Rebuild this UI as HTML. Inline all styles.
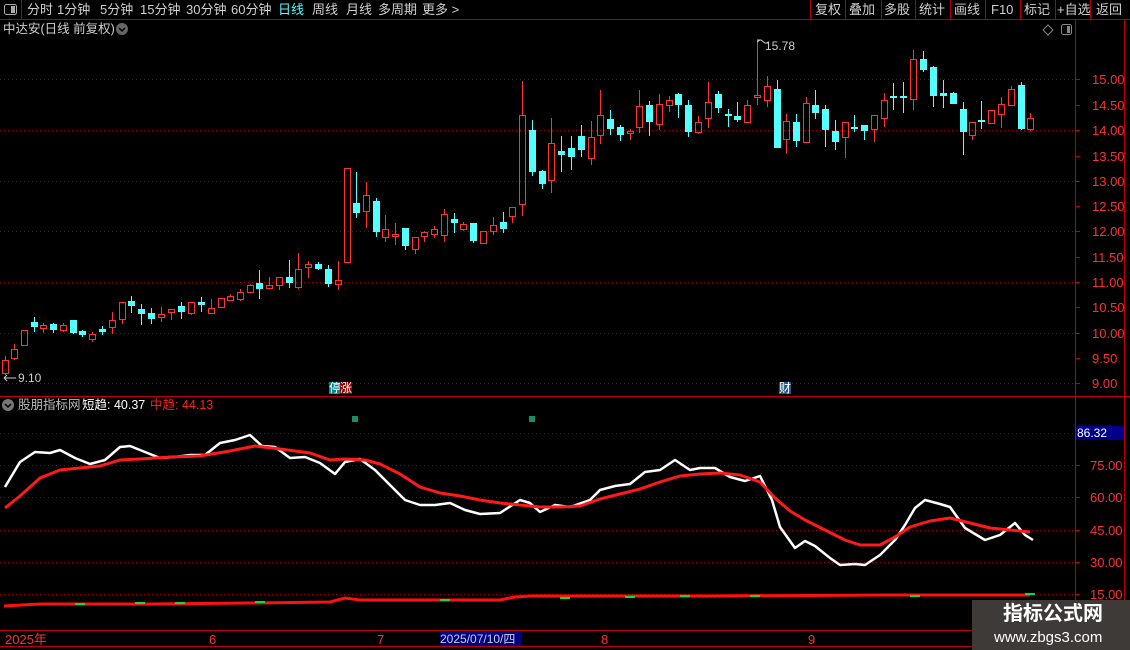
<!DOCTYPE html>
<html><head><meta charset="utf-8"><style>
*{margin:0;padding:0;box-sizing:border-box}
body{width:1130px;height:650px;background:#000;overflow:hidden;position:relative;font-family:"Liberation Sans","Noto Sans CJK SC",sans-serif;font-size:13px;color:#d0d0d0}
.a{position:absolute;white-space:nowrap;line-height:1}
svg{position:absolute;left:0;top:0}
</style></head><body>
<svg id="s" width="1130" height="650" xmlns="http://www.w3.org/2000/svg"></svg>
<div class="a" style="left:27px;top:3px">分时</div>
<div class="a" style="left:57px;top:3px">1分钟</div>
<div class="a" style="left:100px;top:3px">5分钟</div>
<div class="a" style="left:140px;top:3px">15分钟</div>
<div class="a" style="left:186px;top:3px">30分钟</div>
<div class="a" style="left:231px;top:3px">60分钟</div>
<div class="a" style="left:278px;top:3px;color:#54ffff">日线</div>
<div class="a" style="left:312px;top:3px">周线</div>
<div class="a" style="left:346px;top:3px">月线</div>
<div class="a" style="left:378px;top:3px">多周期</div>
<div class="a" style="left:422px;top:3px">更多 &gt;</div>
<div class="a" style="left:815px;top:3px">复权</div>
<div class="a" style="left:849px;top:3px">叠加</div>
<div class="a" style="left:884px;top:3px">多股</div>
<div class="a" style="left:919px;top:3px">统计</div>
<div class="a" style="left:954px;top:3px">画线</div>
<div class="a" style="left:991px;top:3px">F10</div>
<div class="a" style="left:1024px;top:3px">标记</div>
<div class="a" style="left:1057px;top:3px">+自选</div>
<div class="a" style="left:1096px;top:3px">返回</div>
<div class="a" style="left:3px;top:23px;font-size:12.5px">中达安(日线 前复权)</div>
<div class="a" style="left:765px;top:40px;font-size:12px;color:#ccc">15.78</div>
<div class="a" style="left:18px;top:372px;font-size:12px;color:#ccc">9.10</div>
<div class="a" style="left:329px;top:382px;font-size:12px;background:#00868b;color:#fff;width:11px">停</div>
<div class="a" style="left:340px;top:382px;font-size:12px;background:#8b0000;color:#fff;width:12px">涨</div>
<div class="a" style="left:779px;top:382px;font-size:12px;background:#1e5a8a;color:#fff;width:12px">财</div>
<div class="a" style="left:18px;top:399px;color:#bbb;font-size:12.5px">股朋指标网</div>
<div class="a" style="left:82px;top:399px;color:#fff;font-size:12.5px">短趋: 40.37</div>
<div class="a" style="left:150px;top:399px;color:#ff2020;font-size:12.5px">中趋: 44.13</div>
<div class="a" style="left:1076px;top:426px;width:48px;height:14px;background:#00008b;color:#fff;font-size:12px;padding:1px 0 0 1px">86.32</div>
<div class="a" style="left:5px;top:633px;color:#ff3030">2025年</div>
<div class="a" style="left:209px;top:633px;color:#ff3030">6</div>
<div class="a" style="left:377px;top:633px;color:#ff3030">7</div>
<div class="a" style="left:440px;top:631px;width:82px;height:15px;background:#000080;color:#ccd;padding-top:2px;font-size:12px">2025/07/10/四</div>
<div class="a" style="left:601px;top:633px;color:#ff3030">8</div>
<div class="a" style="left:808px;top:633px;color:#ff3030">9</div>
<div class="a" style="left:972px;top:600px;width:158px;height:50px;background:#3d3a38"></div>
<div class="a" style="left:1003px;top:604px;font-size:20px;font-weight:bold;color:#fff">指标公式网</div>
<div class="a" style="left:994px;top:630px;font-size:15px;color:#fff">www.zbgs3.com</div>
<script>
var s=document.getElementById('s'),h='';
function L(x1,y1,x2,y2,c,d){h+='<line x1="'+x1+'" y1="'+y1+'" x2="'+x2+'" y2="'+y2+'" stroke="'+c+'" stroke-width="1"'+(d?' stroke-dasharray="1,3"':'')+'/>';}
L(0,19.5,1130,19.5,'#b00000');L(21.5,0,21.5,19,'#b00000');
h+='<rect x="4.5" y="4.5" width="12" height="10" rx="2" fill="none" stroke="#aaa"/><rect x="11" y="6" width="4" height="7" fill="#aaa"/>';
[810,845,881,915,950,985,1020,1055,1090].forEach(function(x){L(x+.5,0,x+.5,19,'#b00000')});
h+='<circle cx="122" cy="29" r="6" fill="#666"/><path d="M119 28l3 3 3-3" stroke="#000" stroke-width="1.5" fill="none"/>';
h+='<path d="M1048 25l5 5-5 5-5-5z" fill="none" stroke="#888"/><rect x="1061.5" y="24.5" width="10" height="10" rx="2" fill="none" stroke="#888"/><rect x="1067" y="26" width="3" height="7" fill="#888"/>';
L(1075.5,20,1075.5,630,'#c00000');L(1124.5,20,1124.5,630,'#c00000');
L(0,396.5,1130,396.5,'#c00000');L(0,630.5,1130,630.5,'#c00000');L(0,646.5,1130,646.5,'#c00000');
var lab=[[15,79],[14.5,105],[14,130],[13.5,156],[13,181],[12.5,206],[12,231],[11.5,257],[11,282],[10.5,307],[10,333],[9.5,358],[9,383]];
lab.forEach(function(a){if(a[0]%1==0)L(0,a[1]+.5,1075,a[1]+.5,'#a00000',1);L(1075,a[1]+.5,1080,a[1]+.5,'#c00000');
h+='<text x="1092" y="'+(a[1]+5)+'" fill="#ff3030" font-size="13" font-family="Liberation Sans">'+a[0].toFixed(2)+'</text>';});
var c=[[4.5,360,373,356,375,1],[14,349,358,344,360,1],[24,330,345,330,345,1],[34,322,327,317,332,0],[43,325,328,323,333,1],[53,324,330,323,333,0],[63,325,330,323,332,1],[73,320,333,320,334,0],[82,331,335,330,337,0],[92,334,339,332,342,1],[102,329,332,326,335,0],[112,320,327,312,334,1],[122,302,319,302,324,1],[131,301,306,296,313,0],[141,309,314,304,325,0],[151,313,319,308,324,0],[161,314,317,307,322,1],[171,309,312,309,320,1],[181,306,312,302,319,0],[191,302,313,302,315,1],[201,302,305,297,312,0],[211,308,313,299,314,1],[221,298,307,298,307,1],[230,296,300,294,300,1],[240,292,299,289,301,1],[250,285,292,284,292,1],[259,283,289,270,299,0],[269,285,288,277,288,1],[279,277,285,277,290,1],[289,277,283,260,288,0],[298,269,287,253,289,1],[308,264,267,261,278,1],[318,264,269,262,270,0],[328,269,284,265,287,0],[338,280,284,261,290,1],[347,168,262,168,262,1],
[356,203,213,172,218,0],[366,195,211,182,228,1],[376,201,232,198,237,0],[385,229,237,215,242,1],[395,234,236,223,245,1],[405,228,246,228,250,0],[415,237,249,237,254,1],[424,232,236,231,242,1],[434,229,234,226,238,1],[444,214,235,209,242,1],[454,219,223,213,233,0],[463,224,229,222,231,1],[473,223,241,223,243,0],[483,231,243,231,244,1],[493,225,231,217,235,1],[503,222,229,212,233,0],[512,207,216,207,223,1],[522,115,204,81,216,1],[532,130,172,120,176,0],[542,171,184,170,189,0],[551,143,180,118,193,1],[561,151,155,136,172,0],[571,148,157,136,170,0],[581,136,150,125,157,0],[591,137,158,121,165,1],[600,115,135,90,144,1],[610,119,129,110,135,0],[620,127,135,125,141,0],[630,131,133,129,140,1],[639,106,127,90,133,1],[649,105,122,101,136,0],[659,104,124,94,130,1],[669,100,105,96,112,1],[678,94,105,93,118,0],[688,105,132,100,137,0],[698,122,132,116,134,1],[708,102,118,82,128,1],[718,94,108,91,113,0],[728,114,116,109,127,0],[737,116,120,102,122,0],[747,105,122,100,123,1],[757,95,97,40,105,1],[767,86,100,76,107,1],[777,89,148,80,148,0],[786,121,139,114,154,1],[796,122,141,114,147,0],[806,103,142,97,142,1],[815,105,113,90,119,0],[825,109,130,105,147,0],[835,131,142,120,150,0],[845,122,137,122,158,1],[854,127,129,115,132,0],[864,125,131,125,140,0],[874,115,129,115,142,1],[884,100,118,93,127,1],[893,96,98,83,110,0],[903,96,98,82,113,0],[913,59,99,50,110,1],[923,59,70,51,72,0],[933,67,96,66,107,0],[943,93,96,80,108,0],[953,93,104,92,104,0],[963,109,132,102,155,0],[972,122,135,122,140,1],[981,120,122,101,129,0],[991,110,123,110,123,1],[1001,104,114,97,128,1],[1011,89,105,86,105,1],[1021,85,129,82,130,0],[1030,118,129,113,131,1]];
c.forEach(function(k){var col=k[5]?'#ff3232':'#54ffff';var x=Math.round(k[0]);
if(k[5]){L(x+.5,k[3],x+.5,k[1],col);L(x+.5,k[2],x+.5,k[4],col);h+='<rect x="'+(x-2.5)+'" y="'+(k[1]+.5)+'" width="6" height="'+Math.max(1,k[2]-k[1])+'" fill="none" stroke="'+col+'"/>';}
else{L(x+.5,k[3],x+.5,k[4],col);h+='<rect x="'+(x-3)+'" y="'+k[1]+'" width="7" height="'+Math.max(1,k[2]-k[1])+'" fill="'+col+'"/>';}});
h+='<path d="M757 42l3-2 M757 40h4l4 3h4" stroke="#ccc" fill="none"/><path d="M4 378h12M4 378l3-3M4 378l3 3" stroke="#ccc" fill="none"/>';
h+='<circle cx="8" cy="405" r="6" fill="#777"/><path d="M5 404l3 3 3-3" stroke="#000" stroke-width="1.5" fill="none"/>';
[433,465,497,530,562,594].forEach(function(y,i){L(0,y+.5,1075,y+.5,'#a00000',1);L(1075,y+.5,1080,y+.5,'#c00000');if(i)h+='<text x="1090" y="'+(y+5)+'" fill="#ff3030" font-size="13" font-family="Liberation Sans">'+[0,'75.00','60.00','45.00','30.00','15.00'][i]+'</text>';});
h+='<rect x="352" y="416" width="6" height="6" fill="#1e8a66"/><rect x="529" y="416" width="6" height="6" fill="#1e8a66"/>';
var w=[5,487,20,462,35,452,50,453,60,450,75,458,90,464,105,460,120,447,130,446,145,452,160,458,175,457,190,455,205,455,220,443,235,440,250,435,262,446,275,447,290,458,305,457,320,463,335,474,345,462,360,459,375,470,390,485,405,500,420,505,435,505,450,503,465,510,480,514,500,513,520,500,530,503,540,512,555,505,570,507,590,500,600,490,615,486,630,484,645,472,660,470,675,460,690,470,700,468,715,468,730,477,745,481,760,476,772,500,780,527,795,548,805,541,815,546,830,558,840,565,855,564,865,565,880,555,895,540,905,525,915,508,925,500,940,504,950,507,965,528,985,540,1000,535,1015,523,1025,535,1033,540];
var r=[5,508,20,496,40,478,60,470,80,468,100,466,120,460,140,459,170,457,200,456,230,451,255,446,280,449,310,453,330,460,345,459,365,460,380,464,400,474,420,487,440,493,460,496,480,500,500,503,520,505,540,507,560,507,580,506,600,499,620,494,640,489,660,482,680,476,700,474,720,473,740,475,760,482,775,498,790,511,805,520,825,530,845,540,860,545,880,545,895,537,910,527,930,521,950,518,970,523,990,528,1010,530,1030,532];
function P(a,col,sw){var d='M'+a[0]+' '+a[1];for(var i=2;i<a.length;i+=2)d+='L'+a[i]+' '+a[i+1];h+='<path d="'+d+'" stroke="'+col+'" stroke-width="'+sw+'" fill="none" stroke-linejoin="round"/>';}
P(w,'#ffffff',2.5);P(r,'#ff1a1a',3);
h+='<path d="M4 606L40 604 150 604 250 603 330 602 345 598 360 600 500 600 515 597 530 596 700 596 900 595 1030 595" stroke="#ff1010" stroke-width="3" fill="none"/>';
[[75,604],[135,603],[175,603],[255,602],[440,600],[560,598],[625,597],[680,596],[750,596],[910,596],[1025,594]].forEach(function(p){h+='<rect x="'+p[0]+'" y="'+(p[1]-1)+'" width="10" height="2" fill="#00e040"/>';});
s.innerHTML=h;
</script>
</body></html>
